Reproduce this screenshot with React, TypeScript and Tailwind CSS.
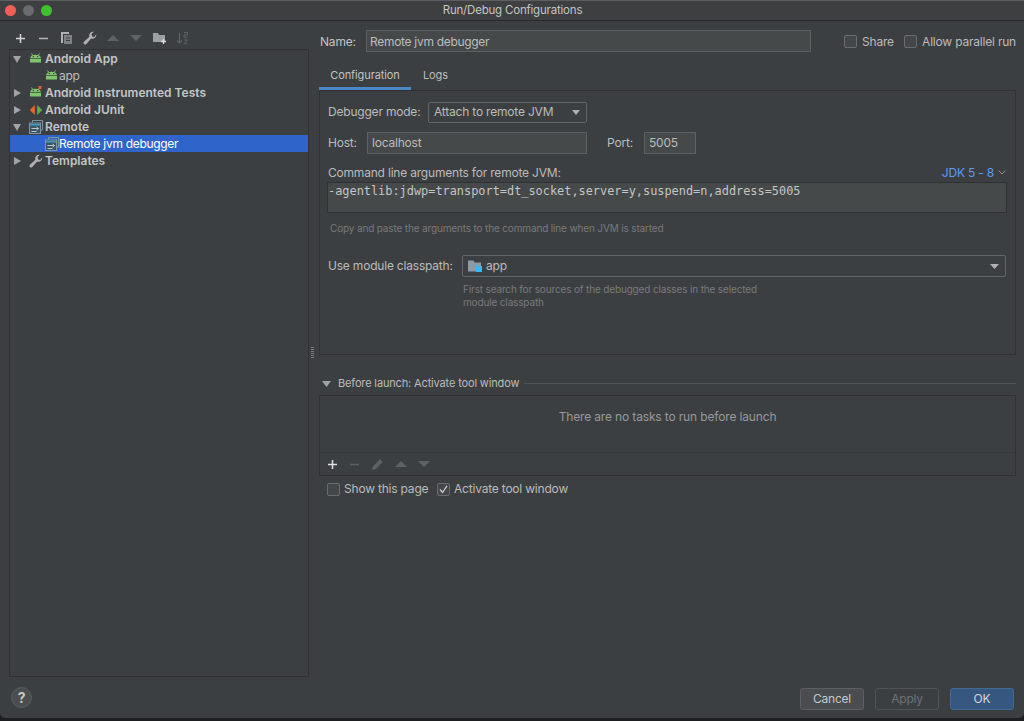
import React from "react";

const Arrow = ({ open }: { open?: boolean }) => (
  <svg width="10" height="10" viewBox="0 0 10 10" className="shrink-0">
    {open ? <path d="M1 2h8L5 9z" fill="#a0a4a7" /> : <path d="M2 1l7 4-7 4z" fill="#a0a4a7" />}
  </svg>
);

const Droid = ({ badge }: { badge?: boolean }) => (
  <svg width="13" height="13" viewBox="0 0 13 13" className="shrink-0">
    <path d="M2.500 1.500l1.200 1.800M10.500 1.500L9.300 3.300" stroke="#7fc66a" strokeWidth="1" />
    <path d="M1.200 6C1.500 3.800 3.500 2.700 6.500 2.700S11.500 3.800 11.800 6z" fill="#7fc66a" />
    <path d="M1 6.700h11V10.500H1z" fill="#7fc66a" />
    <rect x="3.700" y="4" width="1.200" height="1.200" fill="#3c3f41" />
    <rect x="8.100" y="4" width="1.200" height="1.200" fill="#3c3f41" />
    {badge && <path d="M9.500 0h3v3h-3z" fill="#d9603b" />}
  </svg>
);

const RemoteIcon = () => (
  <svg width="14" height="14" viewBox="0 0 14 14" className="shrink-0">
    <path d="M3.500 2.500V.5h10v9.500h-2" fill="none" stroke="#7f95a3" strokeWidth="1" />
    <rect x=".5" y="3" width="11" height="10.500" fill="#3d5666" stroke="#7f95a3" />
    <path d="M1 4h10v1.500H1z" fill="#3a9cc4" />
    <path d="M2.500 8.500h7M7.500 7l2 1.500-2 1.500M2.500 11.500h5" fill="none" stroke="#b8c4cc" strokeWidth="1" />
  </svg>
);

const Wrench = () => (
  <svg width="14" height="14" viewBox="0 0 14 14" className="shrink-0">
    <path
      d="M13.200 3.200a3.800 3.800 0 0 1-5 4.300L3.300 13a1.500 1.500 0 0 1-2.300-2.200l5.400-5A3.800 3.800 0 0 1 10.800.8L8.500 3.100l.6 2.300 2.200.5z"
      fill="#afb1b3"
    />
  </svg>
);

const JUnit = () => (
  <svg width="14" height="14" viewBox="0 0 14 14" className="shrink-0">
    <path d="M5.800 2v10L.8 7z" fill="#e8662d" />
    <path d="M8.200 2v10l5-5z" fill="#5fad4e" />
  </svg>
);

const Tri = ({ up }: { up?: boolean }) => (
  <svg width="12" height="8" viewBox="0 0 12 8">
    <path d={up ? "M0 7L6 1l6 6z" : "M0 1h12L6 7z"} fill="#5f6263" />
  </svg>
);

const Plus = ({ color = "#d0d2d3" }: { color?: string }) => (
  <svg width="11" height="11" viewBox="0 0 11 11">
    <path d="M5.500 1v9M1 5.500h9" stroke={color} strokeWidth="1.500" />
  </svg>
);

const Minus = ({ color = "#b0b2b3" }: { color?: string }) => (
  <svg width="11" height="11" viewBox="0 0 11 11">
    <path d="M1 5.500h9" stroke={color} strokeWidth="1.500" />
  </svg>
);

const Check = ({ checked }: { checked?: boolean }) => (
  <span className="flex h-[13px] w-[13px] shrink-0 items-center justify-center rounded-[2px] border border-[#6a6c6e] bg-[#43474a]">
    {checked && (
      <svg width="9" height="9" viewBox="0 0 9 9">
        <path d="M1 4.500l2.500 3L8 .8" fill="none" stroke="#c9cbcc" strokeWidth="1.300" />
      </svg>
    )}
  </span>
);

const ToolCell = ({ children }: { children: React.ReactNode }) => (
  <span className="flex w-[23px] shrink-0 justify-center">{children}</span>
);

function TreeRow({ label, depth, open, arrow, icon, selected, bold }: {
  label: string;
  depth: number;
  open?: boolean;
  arrow?: boolean;
  icon: React.ReactNode;
  selected?: boolean;
  bold?: boolean;
}) {
  return (
    <div className={`flex h-[17px] items-center ${selected ? "bg-[#2f65ca] text-white" : ""}`}>
      <span className="flex w-[14px] justify-center">{arrow && <Arrow open={open} />}</span>
      <span className={`flex w-[15px] justify-center ${depth ? "ml-[20px]" : "ml-[4px]"}`}>{icon}</span>
      {bold ? (
        <span className="ml-[2px] whitespace-nowrap font-semibold tracking-[0px] text-[#c3c5c6]">{label}</span>
      ) : (
        <span className={`whitespace-nowrap tracking-[-0.3px] ${selected ? "" : "text-[#bbbdbe]"}`}>{label}</span>
      )}
    </div>
  );
}

export default function App() {
  return (
    <div className="flex h-[721px] w-[1024px] flex-col overflow-hidden bg-[#1d1e1f] text-[12px] tracking-[-0.2px] text-[#bbbbbb] [font-family:Inter,'Liberation_Sans',sans-serif]">
      <div className="flex h-[718px] flex-col rounded-b-[5px] bg-[#3c3f41]">
        {/* title bar */}
        <div className="flex h-[21px] shrink-0 items-center border-t border-b border-t-[#5b5d5e] border-b-[#28292a] bg-[#3d3f40] pl-[5px]">
          <div className="flex gap-[7px]">
            <span className="h-[11px] w-[11px] rounded-full bg-[#f35e57]" />
            <span className="h-[11px] w-[11px] rounded-full bg-[#6a6b6c]" />
            <span className="h-[11px] w-[11px] rounded-full bg-[#3fc02e]" />
          </div>
          <div className="flex-1 pr-[51px] pt-[1px] text-center text-[11.5px] text-[#c4c5c6]">Run/Debug Configurations</div>
        </div>

        <div className="flex min-h-0 flex-1">
          {/* left column */}
          <div className="flex w-[309px] shrink-0 flex-col pl-[9px]">
            <div className="flex h-[28px] shrink-0 items-center pt-[6px]">
              <ToolCell><Plus /></ToolCell>
              <ToolCell><Minus /></ToolCell>
              <ToolCell>
                <svg width="13" height="14" viewBox="0 0 13 14">
                  <path d="M1 1h8v2H3v9H1z" fill="#afb1b3" />
                  <path d="M4 4h8v9H4z" fill="#7f8284" />
                  <path d="M6 7h4M6 9.500h4" stroke="#3c3f41" />
                </svg>
              </ToolCell>
              <ToolCell><Wrench /></ToolCell>
              <ToolCell><Tri up /></ToolCell>
              <ToolCell><Tri /></ToolCell>
              <span className="ml-[1px]">
                <ToolCell>
                  <svg width="15" height="14" viewBox="0 0 15 14">
                    <path d="M1 2h5l1 2h6v7H1z" fill="#9da0a2" />
                    <path d="M11.500 8v5M9 10.500h5" stroke="#dcdddd" strokeWidth="1.300" />
                  </svg>
                </ToolCell>
              </span>
              <ToolCell>
                <svg width="13" height="14" viewBox="0 0 13 14">
                  <path d="M3.500 2v10M1 9.500l2.500 2.500L6 9.500" fill="none" stroke="#5f6263" strokeWidth="1.200" />
                  <path d="M8 1.500h3.500v2.500H8v2.200h3.500M8 9h3.500L8 12.800h3.500" fill="none" stroke="#5f6263" strokeWidth="1" />
                </svg>
              </ToolCell>
            </div>
            <div className="flex-1 border border-[#323232] leading-[17px]">
              <TreeRow depth={0} arrow open bold icon={<Droid />} label="Android App" />
              <TreeRow depth={1} icon={<Droid />} label="app" />
              <TreeRow depth={0} arrow bold icon={<Droid badge />} label="Android Instrumented Tests" />
              <TreeRow depth={0} arrow bold icon={<JUnit />} label="Android JUnit" />
              <TreeRow depth={0} arrow open bold icon={<RemoteIcon />} label="Remote" />
              <TreeRow depth={1} selected icon={<RemoteIcon />} label="Remote jvm debugger" />
              <TreeRow depth={0} arrow bold icon={<Wrench />} label="Templates" />
            </div>
            <div className="flex h-[41px] shrink-0 items-center pl-[2px]">
              <span className="flex h-[21px] w-[21px] items-center justify-center rounded-full border border-[#5a5d5f] bg-[#4b4e50] text-[14px] font-bold text-[#c5c7c8]">?</span>
            </div>
          </div>

          {/* splitter grip */}
          <div className="flex w-[10px] shrink-0 flex-col pl-[2px] pt-[326px]">
            <div className="h-[12px] w-[3px] bg-[repeating-linear-gradient(to_bottom,#77797a_0,#77797a_1px,transparent_1px,transparent_2px)]" />
          </div>

          {/* right column */}
          <div className="flex min-w-0 flex-1 flex-col whitespace-nowrap pr-[8px]">
            <div className="mt-[9px] flex h-[22px] shrink-0 items-center">
              <span className="w-[47px] pl-[1px] pt-[1px] text-[#c0c2c3]">Name:</span>
              <div className="flex h-[22px] w-[445px] items-center border border-[#5e6163] bg-[#45494a] px-[3px] pt-[1px] tracking-[-0.3px] text-[#bbbdbe]">Remote jvm debugger</div>
              <span className="ml-[33px]"><Check /></span>
              <span className="ml-[5px] pt-[1px]">Share</span>
              <span className="ml-auto"><Check /></span>
              <span className="ml-[5px] pt-[1px]">Allow parallel run</span>
            </div>

            <div className="mt-[8px] flex h-[30px] shrink-0 items-center text-[11px] tracking-[-0.1px]">
              <div className="relative flex h-[30px] w-[92px] items-center justify-center text-[#c0c2c3]">
                Configuration
                <span className="absolute bottom-0 left-0 right-0 h-[3px] bg-[#4a88c7]" />
              </div>
              <span className="ml-[12px]">Logs</span>
            </div>

            {/* configuration panel */}
            <div className="flex h-[265px] shrink-0 flex-col border border-[#323232] pl-[8px] pr-[8px]">
              <div className="mt-[10px] flex h-[22px] items-center">
                <span className="w-[100px]">Debugger mode:</span>
                <div className="flex h-[21px] w-[159px] items-center justify-between rounded-[2px] border border-[#64676a] bg-[#3c3f41] pl-[5px] pr-[6px]">
                  Attach to remote JVM
                  <svg width="8" height="5" viewBox="0 0 8 5"><path d="M0 0h8L4 5z" fill="#afb1b3" /></svg>
                </div>
              </div>
              <div className="mt-[9px] flex h-[22px] items-center">
                <span className="w-[39px]">Host:</span>
                <div className="flex h-[22px] w-[220px] items-center border border-[#5e6163] bg-[#45494a] px-[4px]">localhost</div>
                <span className="ml-[20px] w-[37px]">Port:</span>
                <div className="flex h-[22px] w-[52px] items-center border border-[#5e6163] bg-[#45494a] px-[4px]">5005</div>
              </div>
              <div className="mb-[1px] mt-[10px] flex h-[17px] items-center justify-between pr-[1px]">
                <span>Command line arguments for remote JVM:</span>
                <span className="flex items-center gap-[4px] text-[#589df6]">
                  JDK 5 - 8
                  <svg width="8" height="5" viewBox="0 0 8 5"><path d="M.5.500L4 4 7.500.500" fill="none" stroke="#8d9092" /></svg>
                </span>
              </div>
              <div className="-ml-[1px] h-[31px] border border-[#2f3132] bg-[#45494a] pt-[1px] text-[11.9px] leading-[15px] tracking-normal text-[#c3c5c6] [font-family:'DejaVu_Sans_Mono',monospace]">
                -agentlib:jdwp=transport=dt_socket,server=y,suspend=n,address=5005
              </div>
              <div className="mt-[8px] pl-[2px] text-[10px] leading-[14px] tracking-[-0.15px] text-[#787a7c]">Copy and paste the arguments to the command line when JVM is started</div>
              <div className="mt-[20px] flex h-[22px] items-center">
                <span className="w-[134px]">Use module classpath:</span>
                <div className="flex h-[22px] w-[544px] items-center rounded-[2px] border border-[#64676a] pl-[5px] pr-[6px]">
                  <svg width="14" height="14" viewBox="0 0 14 14" className="shrink-0">
                    <path d="M0 1.500h5.500l1 2H13v9H0z" fill="#8c9aa5" />
                    <rect x="8" y="7" width="6" height="6" fill="#3bb6ef" />
                  </svg>
                  <span className="ml-[4px] flex-1">app</span>
                  <svg width="9" height="5" viewBox="0 0 9 5"><path d="M0 0h9L4.500 5z" fill="#afb1b3" /></svg>
                </div>
              </div>
              <div className="ml-[135px] mt-[6px] text-[10px] leading-[13px] tracking-[-0.15px] text-[#787a7c]">
                First search for sources of the debugged classes in the selected
                <br />
                module classpath
              </div>
            </div>

            {/* before launch */}
            <div className="mt-[20px] flex h-[17px] shrink-0 items-center">
              <svg width="9" height="6" viewBox="0 0 9 6" className="ml-[3px]"><path d="M0 0h9L4.500 6z" fill="#a0a4a7" /></svg>
              <span className="ml-[7px] text-[11px] tracking-[-0.15px]">Before launch: Activate tool window</span>
              <div className="ml-[5px] h-px flex-1 bg-[#505254]" />
            </div>
            <div className="mt-[3px] flex h-[81px] shrink-0 flex-col border border-[#323232]">
              <div className="flex flex-1 items-center justify-center pb-[14px] tracking-[-0.15px] text-[#97999b]">There are no tasks to run before launch</div>
              <div className="flex h-[23px] items-center gap-[11px] border-t border-[#343637] pl-[7px]">
                <Plus color="#e0e1e2" />
                <Minus color="#5f6263" />
                <svg width="13" height="13" viewBox="0 0 13 13"><path d="M1 12l.8-3.500L9 1.300l2.700 2.700-7.200 7.200z" fill="#5f6263" /></svg>
                <Tri up />
                <Tri />
              </div>
            </div>
            <div className="mt-[6px] flex h-[14px] shrink-0 items-center pl-[8px]">
              <Check />
              <span className="ml-[4px] w-[93px]">Show this page</span>
              <Check checked />
              <span className="ml-[4px]">Activate tool window</span>
            </div>

            <div className="flex-1" />
            <div className="flex h-[30px] shrink-0 items-start justify-end gap-[11px] pr-[2px]">
              <div className="flex h-[22px] w-[64px] items-center justify-center rounded-[3px] border border-[#5d5f61] bg-[#4a4d4f] text-[#c5c7c8]">Cancel</div>
              <div className="flex h-[22px] w-[64px] items-center justify-center rounded-[3px] border border-[#505355] text-[#6f7274]">Apply</div>
              <div className="flex h-[22px] w-[64px] items-center justify-center rounded-[3px] border border-[#436a93] bg-[#365880] text-[#d4d6d8]">OK</div>
            </div>
          </div>
        </div>
      </div>
    </div>
  );
}
